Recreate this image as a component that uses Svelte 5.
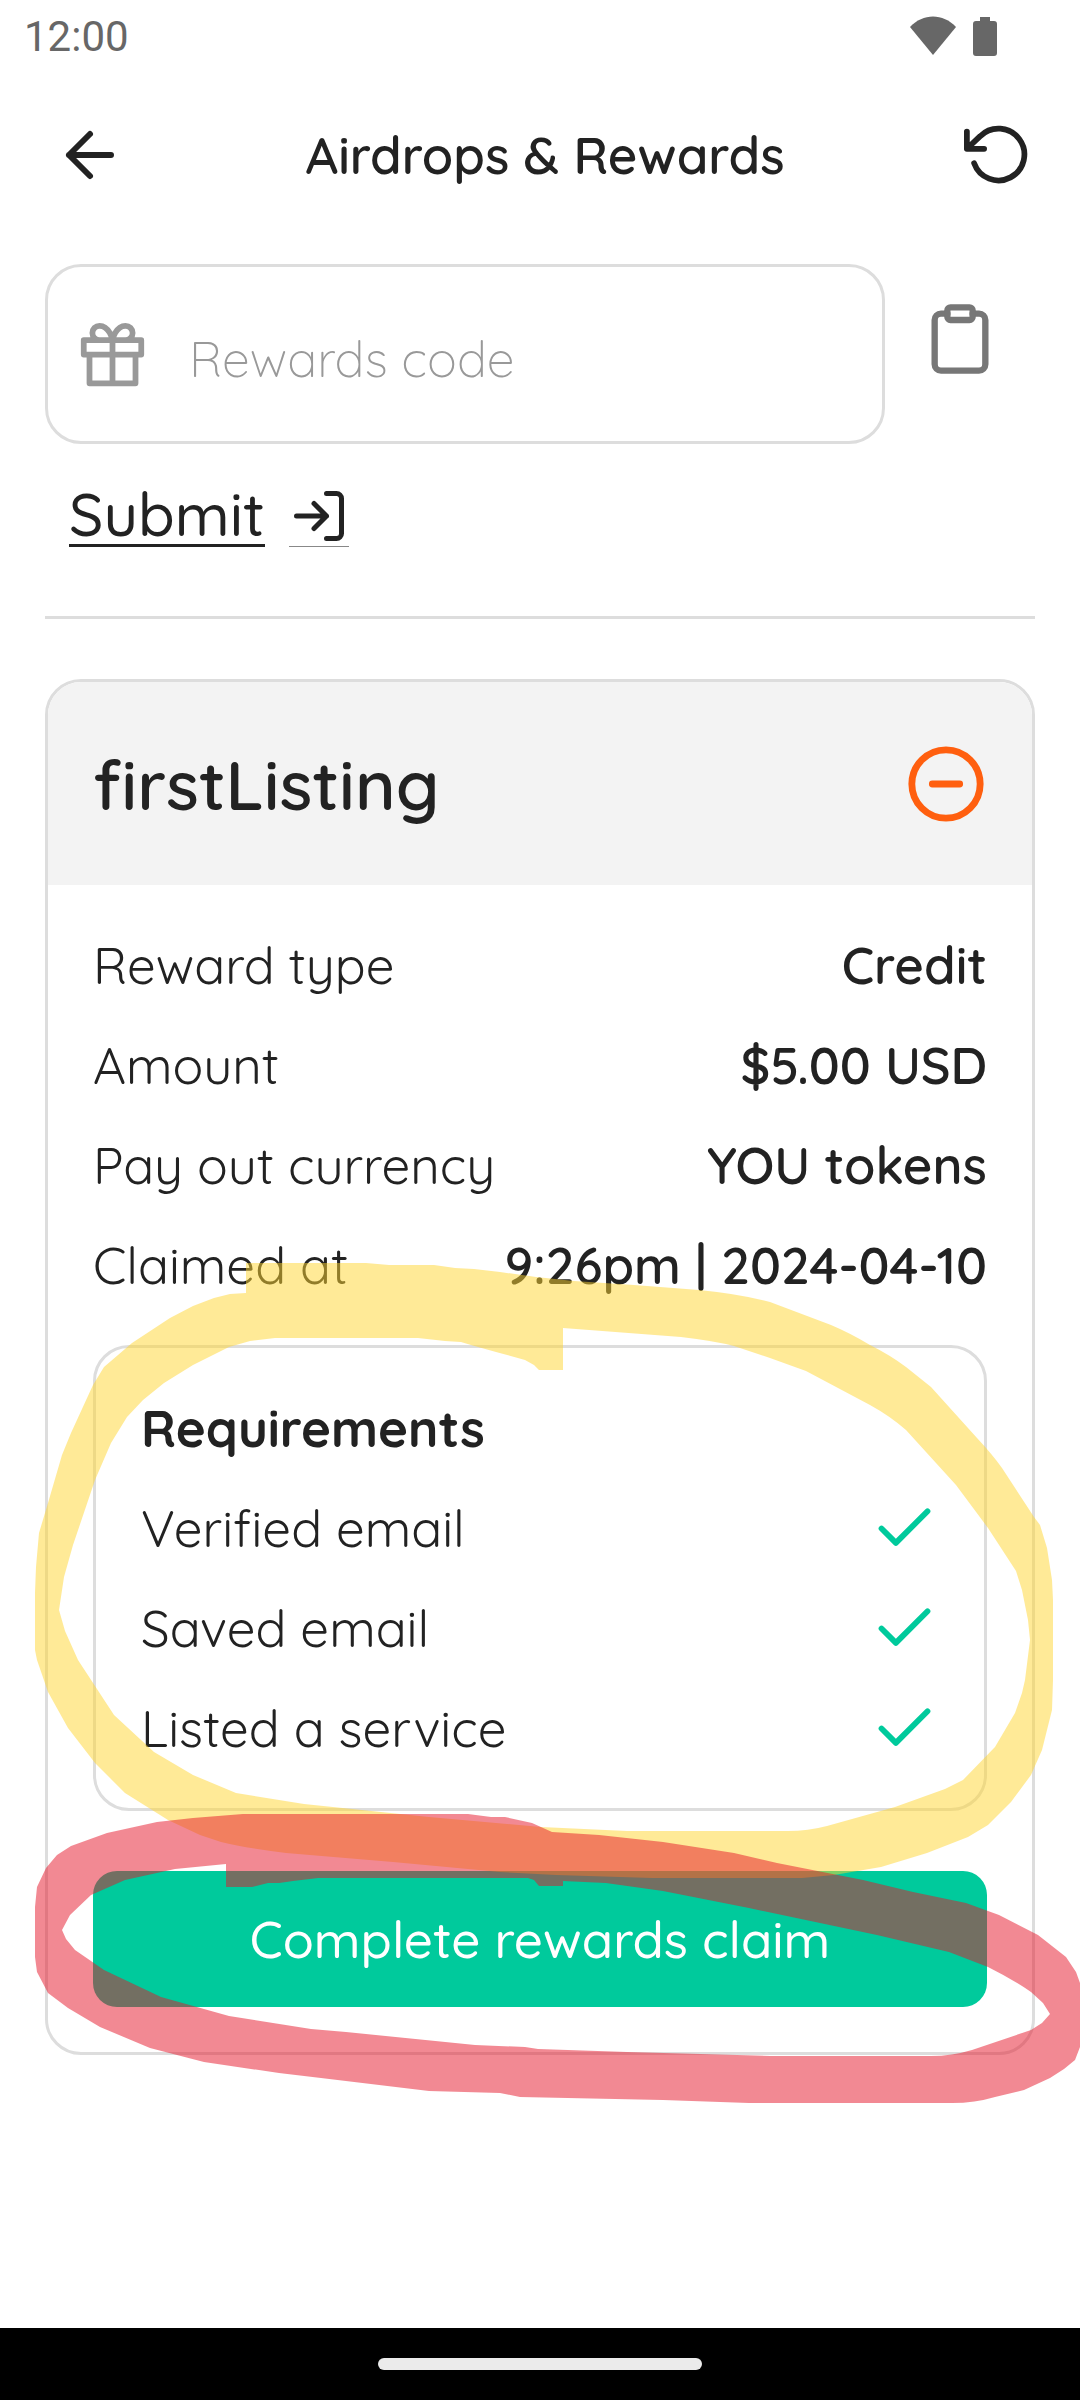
<script>
  let code = '';
  let open = true;

  const reward = {
    name: 'firstListing',
    details: [
      { label: 'Reward type', value: 'Credit' },
      { label: 'Amount', value: '$5.00 USD' },
      { label: 'Pay out currency', value: 'YOU tokens' },
      { label: 'Claimed at', value: '9:26pm | 2024-04-10' }
    ],
    requirements: ['Verified email', 'Saved email', 'Listed a service']
  };

  // Paste the clipboard content into the code field
  async function pasteCode() {
    try {
      code = await navigator.clipboard.readText();
    } catch (err) {
      console.error('Could not read clipboard:', err);
    }
  }
</script>

<div class="screen">
  <div class="status-bar">
    <span>12:00</span>
    <div class="status-icons">
      <svg width="46" height="40" viewBox="0 0 46 40"><path d="M0 11C13-3 33-3 46 11L23 39Z" /></svg>
      <svg width="24" height="40" viewBox="0 0 24 40"><path d="M7 1h10v4h4a3 3 0 0 1 3 3v29a3 3 0 0 1-3 3H3a3 3 0 0 1-3-3V8a3 3 0 0 1 3-3h4z" /></svg>
    </div>
  </div>

  <header class="top-bar">
    <button class="icon-button" aria-label="Back">
      <svg class="icon" width="72" height="72" viewBox="0 0 24 24"><path d="M19 12H5M12 19l-7-7 7-7" /></svg>
    </button>
    <h1>Airdrops &amp; Rewards</h1>
    <button class="icon-button" aria-label="Reload">
      <svg class="icon" width="69" height="69" viewBox="0 0 24 24"><path d="M1 4v6h6M3.51 15a9 9 0 1 0 2.13-9.36L1 10" /></svg>
    </button>
  </header>

  <main>
    <form on:submit|preventDefault>
      <div class="code-row">
        <label class="code-field">
          <svg class="icon" width="69" height="69" viewBox="0 0 24 24"><path d="M20 12v10H4V12M2 7h20v5H2zM12 22V7M12 7H7.5a2.5 2.5 0 0 1 0-5C11 2 12 7 12 7zM12 7h4.5a2.5 2.5 0 0 0 0-5C13 2 12 7 12 7z" /></svg>
          <input type="text" placeholder="Rewards code" aria-label="Rewards code" bind:value={code} />
        </label>
        <button type="button" class="icon-button paste" aria-label="Paste" on:click={pasteCode}>
          <svg class="icon" width="76" height="76" viewBox="0 0 24 24"><path d="M16 4h2a2 2 0 0 1 2 2v14a2 2 0 0 1-2 2H6a2 2 0 0 1-2-2V6a2 2 0 0 1 2-2h2" /><rect x="8" y="2" width="8" height="4" rx="1" /></svg>
        </button>
      </div>
      <button type="submit" class="submit">
        <span class="submit-text">Submit</span>
        <span class="submit-icon">
          <svg class="icon" width="60" height="60" viewBox="0 0 24 24"><path d="M15 3h4a2 2 0 0 1 2 2v14a2 2 0 0 1-2 2h-4M10 17l5-5-5-5M15 12H3" /></svg>
        </span>
      </button>
    </form>

    <hr />

    <section class="card">
      <div class="card-header">
        <h2>{reward.name}</h2>
        <button class="icon-button toggle" aria-label="Toggle details" on:click={() => (open = !open)}>
          <svg class="icon" width="82" height="82" viewBox="0 0 24 24"><circle cx="12" cy="12" r="10" /><path d="M8 12h8" /></svg>
        </button>
      </div>

      {#if open}
        <div class="card-body">
          <dl>
            {#each reward.details as item}
              <div class="row">
                <dt>{item.label}</dt>
                <dd>{item.value}</dd>
              </div>
            {/each}
          </dl>

          <div class="requirements">
            <h3 class="row">Requirements</h3>
            <ul>
              {#each reward.requirements as requirement}
                <li class="row">
                  {requirement}
                  <svg class="icon check" width="69" height="69" viewBox="0 0 24 24"><path d="M20 6L9 17l-5-5" /></svg>
                </li>
              {/each}
            </ul>
          </div>

          <button class="claim">Complete rewards claim</button>
        </div>
      {/if}
    </section>
  </main>

  <div class="nav-bar"><div class="nav-handle"></div></div>

  <!-- Marker strokes around the requirements and the claim button -->
  <svg class="markers" viewBox="0 0 1080 2400" aria-hidden="true">
    <path
      class="yellow"
      d="M246 1263L366 1263L389 1265L434 1265L455 1268L474 1269L500 1272L536 1277L574 1281L634 1285L699 1290Q740 1294 770 1302L831 1325Q850 1333 870 1345Q890 1355 906 1367L931 1387L977 1438Q992 1454 1002 1468L1034 1517L1040 1525L1047 1548L1052 1580L1053 1600L1053 1680L1052 1710L1042 1750L1031 1775L1011 1802L988 1825L968 1837L927 1853L881 1867L834 1875L802 1878L652 1878L556 1875L500 1872L393 1862L286 1853Q245 1848 221 1842L200 1835L168 1820L125 1793L95 1763L68 1728L48 1692L37 1660L35 1650L35 1593L36 1567L39 1533L48 1503L62 1455L71 1433L93 1385L104 1367L132 1343L170 1318L193 1306L214 1298L230 1294L246 1293Z
         M275 1338L418 1338L445 1341L461 1342L471 1345L496 1352L525 1360L534 1365L539 1370L563 1370L563 1328L681 1337Q715 1341 734 1346L770 1358L806 1371L870 1405Q890 1416 906 1430L956 1485L988 1528L1016 1571L1022 1590L1028 1620L1030 1640L1025 1680L1022 1693L1015 1713L995 1747L963 1780L945 1789L895 1807L827 1826Q808 1831 788 1831L627 1831L541 1827L429 1817L304 1804L236 1793L193 1775L154 1752L114 1715L78 1660L65 1631L59 1610L64 1577L73 1545L95 1480L111 1443L127 1417L143 1400L164 1383L193 1365L229 1347L250 1341Z"
    />
    <path
      class="red"
      d="M243 1814L468 1814L491 1817L505 1817L532 1823L552 1832L599 1835L663 1842L734 1853L777 1863L863 1880L913 1892L966 1903L999 1915L1038 1935L1066 1957L1076 1972L1080 1983L1080 2047L1075 2060L1064 2069L1050 2078L1024 2090L995 2097Q975 2103 952 2103L749 2103L663 2100L520 2097L500 2093L429 2091L321 2078L279 2073L204 2062L150 2048L100 2027L68 2008L48 1993L37 1972L35 1957L35 1907L37 1887L46 1868L57 1855L71 1846L107 1833L157 1822L193 1818Z
         M226 1864L226 1887L252 1887L268 1883L279 1883L293 1881L318 1878L528 1878L534 1880L539 1886L563 1886L563 1881L606 1883L663 1891L749 1908L877 1935L949 1952L988 1967Q1012 1979 1031 1992L1043 2003L1050 2014L1042 2023L1031 2030L972 2050Q952 2056 931 2056L770 2056L627 2052L538 2049L525 2047L475 2045L346 2032L311 2029L229 2016L161 1997L104 1970L75 1950L66 1939L62 1930L70 1915L91 1895L125 1880L175 1869Z"
    />
  </svg>
</div>

<style>
  :global(body) {
    background: #fff;
  }

  .screen {
    position: relative;
    display: flex;
    flex-direction: column;
    min-height: 100vh;
    overflow: hidden;
    background: #fff;
    color: #222;
    font-family: Quicksand, Inter, "Open Sans", sans-serif;
    font-size: 51px;
    font-weight: 400;
    line-height: 60px;
  }

  .screen *,
  .screen {
    box-sizing: border-box;
  }

  svg {
    display: block;
    flex: none;
  }

  .icon {
    fill: none;
    stroke: currentColor;
    stroke-width: 2;
    stroke-linecap: round;
    stroke-linejoin: round;
  }

  h1,
  h2,
  h3,
  dl,
  dd,
  ul {
    margin: 0;
    padding: 0;
    list-style: none;
  }

  button {
    padding: 0;
    border: none;
    background: none;
    color: inherit;
    font: inherit;
    cursor: pointer;
  }

  .status-bar {
    display: flex;
    align-items: center;
    justify-content: space-between;
    height: 74px;
    padding: 0 83px 0 24px;
    color: #676767;
    font-family: Roboto, sans-serif;
    font-size: 42px;
    font-weight: 400;
  }

  .status-icons {
    display: flex;
    gap: 17px;
    height: 42px;
    fill: #676767;
  }

  .top-bar {
    display: flex;
    align-items: center;
    justify-content: space-between;
    height: 161px;
    padding: 0 47px 0 54px;
  }

  h1 {
    font-size: 51px;
    font-weight: 600;
  }

  main {
    flex: 1;
    padding: 29px 45px 45px;
  }

  .code-row {
    display: flex;
    align-items: flex-start;
  }

  .code-field {
    display: flex;
    flex: 1;
    align-items: center;
    gap: 42px;
    height: 180px;
    padding: 0 30px;
    border: 3px solid #ddd;
    border-radius: 36px;
    color: #999;
  }

  input {
    flex: 1;
    min-width: 0;
    padding: 9px 0 0;
    border: none;
    outline: none;
    background: none;
    color: #222;
    font: inherit;
    font-size: 50px;
    font-weight: 300;
  }

  input::placeholder {
    color: #999;
    opacity: 1;
  }

  .paste {
    display: grid;
    place-items: center;
    width: 150px;
    height: 150px;
    color: #777;
  }

  .submit {
    display: flex;
    align-items: flex-end;
    gap: 24px;
    margin: 40px 24px 0;
    font-size: 60px;
    font-weight: 500;
  }

  .submit-text {
    border-bottom: 3px solid #222;
  }

  .submit-icon {
    border-bottom: 1px solid #888;
  }

  hr {
    height: 3px;
    margin: 69px 0 60px;
    border: none;
    background: #ddd;
  }

  .card {
    overflow: hidden;
    border: 3px solid #ddd;
    border-radius: 36px;
  }

  .card-header {
    display: flex;
    align-items: center;
    justify-content: space-between;
    height: 203px;
    padding: 0 45px;
    background: #f3f3f3;
  }

  h2 {
    font-size: 69px;
    font-weight: 600;
    line-height: 84px;
  }

  .toggle {
    color: #ff5f0f;
  }

  .card-body {
    padding: 30px 45px 45px;
  }

  .row {
    display: flex;
    align-items: center;
    justify-content: space-between;
    height: 100px;
  }

  dd {
    font-weight: 600;
  }

  .requirements {
    margin: 30px 0 60px;
    padding: 30px 45px;
    border: 3px solid #ddd;
    border-radius: 36px;
  }

  h3 {
    font-size: 51px;
    font-weight: 700;
  }

  .check {
    color: #00ca9c;
  }

  .claim {
    width: 100%;
    height: 136px;
    border-radius: 24px;
    background: #00ca9c;
    color: #fff;
    font-weight: 500;
  }

  .nav-bar {
    display: grid;
    place-items: center;
    height: 72px;
    background: #000;
  }

  .nav-handle {
    width: 30%;
    height: 12px;
    border-radius: 6px;
    background: #ebebeb;
  }

  .markers {
    position: absolute;
    top: 0;
    left: 0;
    width: 100%;
    pointer-events: none;
    fill-rule: evenodd;
  }

  .yellow {
    fill: rgba(255, 213, 48, 0.5);
  }

  .red {
    fill: rgba(229, 19, 40, 0.5);
  }
</style>
